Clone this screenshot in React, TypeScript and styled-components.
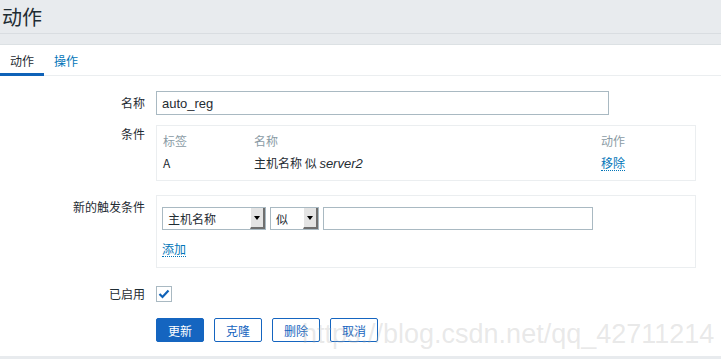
import React from "react";
import styled, { createGlobalStyle } from "styled-components";

const GlobalStyle = createGlobalStyle`
  html, body {
    margin: 0;
    padding: 0;
    background: #e8ebee;
  }
  body {
    font-family: "Liberation Sans", Arial, "Noto Sans CJK SC", sans-serif;
    font-size: 12px;
    color: #1f2c33;
  }
`;

const cjk = `"Noto Sans CJK SC", "Liberation Sans", sans-serif`;

const Page = styled.div`
  position: relative;
  width: 721px;
  height: 359px;
  overflow: hidden;
  background: #e8ebee;
`;

const Header = styled.header`
  height: 33px;
  display: flex;
  align-items: center;
  padding-left: 2px;
  border-bottom: 1px solid #d9dde1;
  font-family: ${cjk};
  font-size: 20px;
  color: #1f2c33;
`;

const Spacer = styled.div`
  height: 10px;
  border-bottom: 1px solid #dce1e4;
`;

const Panel = styled.section`
  background: #ffffff;
  padding-bottom: 14px;
`;

const TabBar = styled.nav`
  display: flex;
  height: 30px;
  border-bottom: 1px solid #ebeef0;
`;

const Tab = styled.div<{ $active?: boolean }>`
  width: 44px;
  display: flex;
  align-items: center;
  justify-content: center;
  box-sizing: border-box;
  padding-top: 2px;
  font-family: ${cjk};
  font-size: 12px;
  color: ${(p) => (p.$active ? "#1f2c33" : "#0275b8")};
  border-bottom: 3px solid ${(p) => (p.$active ? "#0f62b8" : "transparent")};
  margin-bottom: -1px;
`;

const Form = styled.div`
  padding-top: 15px;
  display: flex;
  flex-direction: column;
`;

const Row = styled.div<{ $space: number; $center?: boolean }>`
  display: grid;
  grid-template-columns: 145px 1fr;
  column-gap: 11px;
  align-items: ${(p) => (p.$center ? "center" : "start")};
  margin-bottom: ${(p) => p.$space}px;
`;

const Label = styled.div<{ $lh?: number; $pad?: number }>`
  text-align: right;
  font-family: ${cjk};
  font-size: 12px;
  line-height: ${(p) => p.$lh ?? 18}px;
  padding-top: ${(p) => p.$pad ?? 0}px;
  color: #1f2c33;
`;

const TextInput = styled.div<{ $width: number }>`
  box-sizing: border-box;
  width: ${(p) => p.$width}px;
  height: 24px;
  border: 1px solid #a9b9c2;
  padding: 0 5px;
  display: flex;
  align-items: center;
  font-size: 13px;
  color: #1f2c33;
`;

const Box = styled.div<{ $pad: string }>`
  box-sizing: border-box;
  width: 540px;
  border: 1px solid #ebeef0;
  padding: ${(p) => p.$pad};
`;

const CondTable = styled.div`
  display: grid;
  grid-template-columns: 91px 347px auto;
  grid-auto-rows: 22px;
  align-items: center;
`;

const HeadCell = styled.div`
  font-family: ${cjk};
  font-size: 12px;
  color: #8a9ba5;
`;

const Cell = styled.div`
  font-family: ${cjk};
  font-size: 12px;
  color: #1f2c33;
  white-space: nowrap;

  em {
    font-family: "Liberation Sans", Arial, sans-serif;
    font-size: 13px;
  }
`;

const Link = styled.span`
  font-family: ${cjk};
  font-size: 12px;
  color: #0275b8;
  border-bottom: 1px dotted #0275b8;
  line-height: 15px;
  display: inline-block;
`;

const Controls = styled.div`
  display: flex;
  gap: 4px;
`;

const Select = styled.div<{ $width: number }>`
  box-sizing: border-box;
  width: ${(p) => p.$width}px;
  height: 23px;
  border: 1px solid #a9b9c2;
  display: flex;
  align-items: stretch;
  font-family: ${cjk};
  font-size: 12px;
  color: #1f2c33;
`;

const SelectText = styled.span`
  flex: 1;
  display: flex;
  align-items: center;
  padding-left: 5px;
`;

const SelectArrow = styled.span`
  width: 12px;
  background: #e4e4e4;
  border-right: 2px solid #6f6f6f;
  border-bottom: 2px solid #6f6f6f;
  border-left: 1px solid #ffffff;
  display: flex;
  align-items: center;
  justify-content: center;

  &::after {
    content: "";
    border-left: 3px solid transparent;
    border-right: 3px solid transparent;
    border-top: 4px solid #000000;
  }
`;

const AddLine = styled.div`
  margin-top: 11px;
`;

const Check = styled.div`
  box-sizing: border-box;
  width: 16px;
  height: 16px;
  border: 1px solid #a9b9c2;
  display: flex;
  align-items: center;
  justify-content: center;
`;

const Buttons = styled.div`
  display: flex;
  gap: 10px;
`;

const Button = styled.button<{ $primary?: boolean }>`
  box-sizing: border-box;
  width: 48px;
  height: 24px;
  border-radius: 2px;
  border: 1px solid #1565c0;
  background: ${(p) => (p.$primary ? "#1565c0" : "#ffffff")};
  color: ${(p) => (p.$primary ? "#ffffff" : "#1565c0")};
  font-family: ${cjk};
  font-size: 12px;
  padding: 0;
`;

const Watermark = styled.div`
  position: absolute;
  left: 302px;
  top: 319px;
  font-family: "Liberation Sans", Arial, sans-serif;
  font-size: 27px;
  color: rgba(180, 180, 180, 0.3);
  white-space: nowrap;
  pointer-events: none;
`;

export default function App() {
  return (
    <Page>
      <GlobalStyle />
      <Header>动作</Header>
      <Spacer />
      <Panel>
        <TabBar>
          <Tab $active>动作</Tab>
          <Tab>操作</Tab>
        </TabBar>
        <Form>
          <Row $space={10}>
            <Label $lh={24}>名称</Label>
            <TextInput $width={453}>auto_reg</TextInput>
          </Row>
          <Row $space={14}>
            <Label>条件</Label>
            <Box $pad="3px 6px 7px">
              <CondTable>
                <HeadCell>标签</HeadCell>
                <HeadCell>名称</HeadCell>
                <HeadCell>动作</HeadCell>
                <Cell>A</Cell>
                <Cell>
                  主机名称 似 <em>server2</em>
                </Cell>
                <Cell>
                  <Link>移除</Link>
                </Cell>
              </CondTable>
            </Box>
          </Row>
          <Row $space={17}>
            <Label $pad={3}>新的触发条件</Label>
            <Box $pad="11px 5px 10px">
              <Controls>
                <Select $width={104}>
                  <SelectText>主机名称</SelectText>
                  <SelectArrow />
                </Select>
                <Select $width={49}>
                  <SelectText>似</SelectText>
                  <SelectArrow />
                </Select>
                <TextInput $width={270} style={{ height: 23 }} />
              </Controls>
              <AddLine>
                <Link>添加</Link>
              </AddLine>
            </Box>
          </Row>
          <Row $space={15} $center>
            <Label>已启用</Label>
            <Check>
              <svg width="12" height="10" viewBox="0 0 12 10">
                <path d="M1.5 5 L4.5 8 L10.5 1.5" fill="none" stroke="#0f62b8" strokeWidth="2.2" />
              </svg>
            </Check>
          </Row>
          <Row $space={0}>
            <div />
            <Buttons>
              <Button $primary>更新</Button>
              <Button>克隆</Button>
              <Button>删除</Button>
              <Button>取消</Button>
            </Buttons>
          </Row>
        </Form>
      </Panel>
      <Watermark>https://blog.csdn.net/qq_42711214</Watermark>
    </Page>
  );
}
